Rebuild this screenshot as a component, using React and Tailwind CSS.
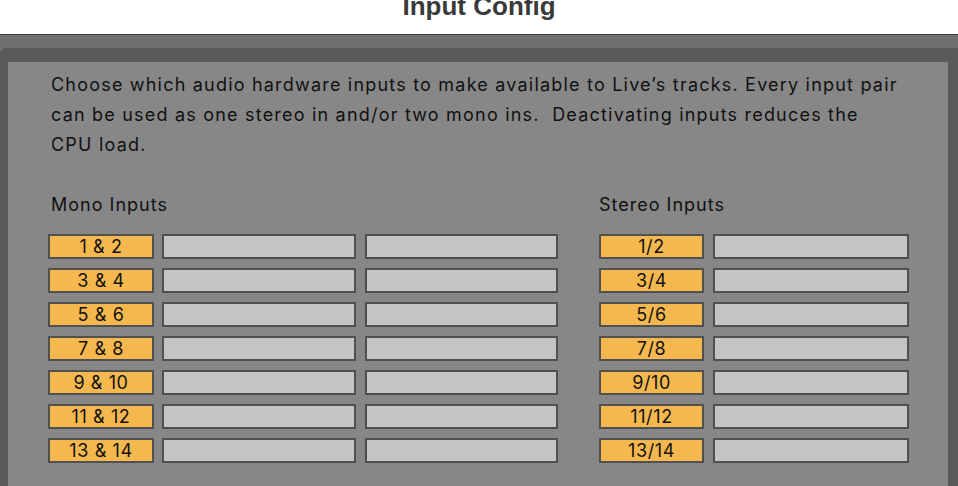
import React from "react";

const mono = ["1 & 2", "3 & 4", "5 & 6", "7 & 8", "9 & 10", "11 & 12", "13 & 14"];
const stereo = ["1/2", "3/4", "5/6", "7/8", "9/10", "11/12", "13/14"];

function Chip({ label, w }) {
  return (
    <div className={`${w} h-[25px] shrink-0 border-2 border-[#505050] bg-[#f5b84f] flex items-center justify-center text-[18px] tracking-[0.6px] leading-none text-[#111]`}>
      {label}
    </div>
  );
}

function Slot({ w }) {
  return <div className={`${w} h-[25px] shrink-0 border-2 border-[#505050] bg-[#c4c4c4]`} />;
}

export default function App() {
  return (
    <div className="w-[958px] h-[486px] overflow-hidden flex flex-col bg-white" style={{ fontFamily: "Inter, 'Noto Sans', sans-serif" }}>
      {/* title bar */}
      <div className="h-[34px] shrink-0 bg-white overflow-hidden flex justify-center">
        <div className="mt-[-9px] text-[26px] font-bold leading-[30px] text-[#3a3a3a]" style={{ fontFamily: "'Liberation Sans', Arial, sans-serif" }}>
          Input Config
        </div>
      </div>
      <div className="h-px shrink-0 bg-[#3c3c3c]" />

      <div className="flex-1 flex flex-col bg-[#707070] pt-[13px]">
        {/* frame */}
        <div className="flex-1 bg-[#5a5a5a] rounded-tl-md pt-[14px] pl-[8px] pr-[10px] flex">
          <div className="flex-1 bg-[#878787] pt-[8px] pl-[40px] text-[#111]">
            <p className="pl-[3px] text-[18px] leading-[30px] tracking-[1.2px] w-[853px]">
              Choose which audio hardware inputs to make available to Live’s tracks. Every input pair can be used as one stereo in and/or two mono ins.&nbsp; Deactivating inputs reduces the CPU load.
            </p>

            <div className="mt-[30px] flex gap-[41px]">
              {/* mono */}
              <div className="flex flex-col">
                <div className="pl-[3px] text-[18px] tracking-[1px] leading-[30px]">Mono Inputs</div>
                <div className="mt-[14px] flex flex-col gap-[9px]">
                  {mono.map(m => (
                    <div key={m} className="flex">
                      <Chip label={m} w="w-[106px]" />
                      <div className="ml-[8px]"><Slot w="w-[194px]" /></div>
                      <div className="ml-[9px]"><Slot w="w-[193px]" /></div>
                    </div>
                  ))}
                </div>
              </div>

              {/* stereo */}
              <div className="flex flex-col">
                <div className="text-[18px] tracking-[1px] leading-[30px]">Stereo Inputs</div>
                <div className="mt-[14px] flex flex-col gap-[9px]">
                  {stereo.map(s => (
                    <div key={s} className="flex">
                      <Chip label={s} w="w-[105px]" />
                      <div className="ml-[9px]"><Slot w="w-[196px]" /></div>
                    </div>
                  ))}
                </div>
              </div>
            </div>
          </div>
        </div>
      </div>
    </div>
  );
}
